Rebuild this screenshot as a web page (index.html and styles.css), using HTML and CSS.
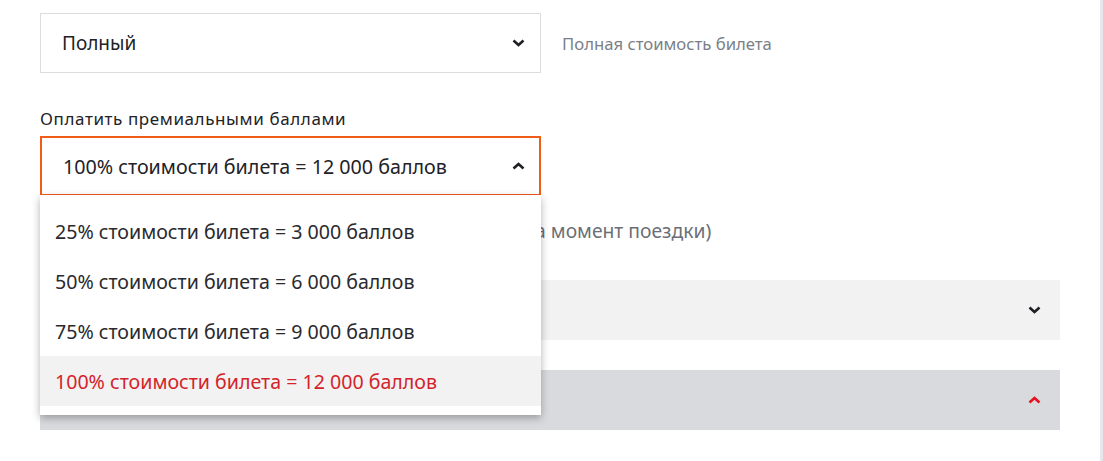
FILE: index.html
```html
<!DOCTYPE html>
<html lang="ru">
<head>
<meta charset="utf-8">
<link rel="stylesheet" href="styles.css">
</head>
<body>
<div class="page">
  <div class="form">
    <div class="row">
      <div class="select">
        <span class="value">Полный</span>
        <svg class="chev" width="13" height="8" viewBox="0 0 13 8"><path d="M1.5 1.5 L6.5 6 L11.5 1.5" fill="none" stroke="#1f1f24" stroke-width="2.6"/></svg>
      </div>
      <span class="hint">Полная стоимость билета</span>
    </div>

    <div class="label">Оплатить премиальными баллами</div>
    <div class="select-wrap">
      <div class="select active">
        <span class="value">100% стоимости билета = 12 000 баллов</span>
        <svg class="chev" width="13" height="8" viewBox="0 0 13 8"><path d="M1.5 6.5 L6.5 2 L11.5 6.5" fill="none" stroke="#1f1f24" stroke-width="2.6"/></svg>
      </div>
      <ul class="menu">
        <li>25% стоимости билета = 3 000 баллов</li>
        <li>50% стоимости билета = 6 000 баллов</li>
        <li>75% стоимости билета = 9 000 баллов</li>
        <li class="selected">100% стоимости билета = 12 000 баллов</li>
      </ul>
    </div>

    <p class="note">Итого к оплате баллами — 12 000 баллов (по курсу на момент поездки)</p>

    <div class="bar light">
      <svg class="chev" width="13" height="8" viewBox="0 0 13 8"><path d="M1.5 1.5 L6.5 6 L11.5 1.5" fill="none" stroke="#1f1f24" stroke-width="2.6"/></svg>
    </div>
    <div class="bar dark">
      <svg class="chev" width="13" height="8" viewBox="0 0 13 8"><path d="M1.5 6.5 L6.5 2 L11.5 6.5" fill="none" stroke="#e3141e" stroke-width="2.6"/></svg>
    </div>
  </div>
  <div class="edge"></div>
</div>
</body>
</html>
```

FILE: styles.css
```css
* { box-sizing: border-box; }
html, body { margin: 0; padding: 0; background: #fff; }
body {
  font-family: "Noto Sans", "Liberation Sans", sans-serif;
  color: #222227;
  height: 461px;
  overflow: hidden;
}
.page {
  display: flex;
  justify-content: space-between;
  height: 461px;
}
.form {
  width: 1060px;
  padding-left: 40px;
  padding-top: 13px;
}
.row {
  display: flex;
  align-items: center;
}
.select {
  width: 501px;
  height: 60px;
  border: 1px solid #dcdcdc;
  display: flex;
  align-items: center;
  justify-content: space-between;
  padding: 0 15px 0 21px;
  font-size: 19px;
  background: #fff;
}
.select.active {
  border: 2px solid #f25c19;
  padding-left: 21px;
  padding-right: 14px;
  font-size: 19.7px;
}
.hint {
  margin-left: 21px;
  font-size: 16.7px;
  color: #7b7f87;
}
.label {
  margin-top: 36px;
  font-size: 17px;
  letter-spacing: 0.6px;
  line-height: 20px;
  margin-bottom: 7px;
}
.select-wrap {
  position: relative;
  width: 501px;
}
.menu {
  position: absolute;
  top: 59px;
  left: 0;
  width: 501px;
  margin: 0;
  padding: 11px 0 9px;
  list-style: none;
  background: #fff;
  box-shadow: 0 3px 8px rgba(0,0,0,0.3);
  z-index: 2;
}
.menu li {
  height: 50px;
  display: flex;
  align-items: center;
  padding-left: 15px;
  font-size: 19.6px;
  color: #2a2a2e;
}
.menu li.selected {
  background: #f2f2f2;
  color: #d4232b;
}
.note {
  margin: 23px 0 0;
  font-size: 19.3px;
  line-height: 24px;
  color: #6c6f76;
}
.bar {
  height: 60px;
  display: flex;
  align-items: center;
  justify-content: flex-end;
  padding-right: 19px;
}
.bar.light { margin-top: 37px; background: #f2f2f2; }
.bar.dark { margin-top: 30px; background: #d9dadd; }
.edge {
  width: 3px;
  background: #e6e6ec;
}
```
